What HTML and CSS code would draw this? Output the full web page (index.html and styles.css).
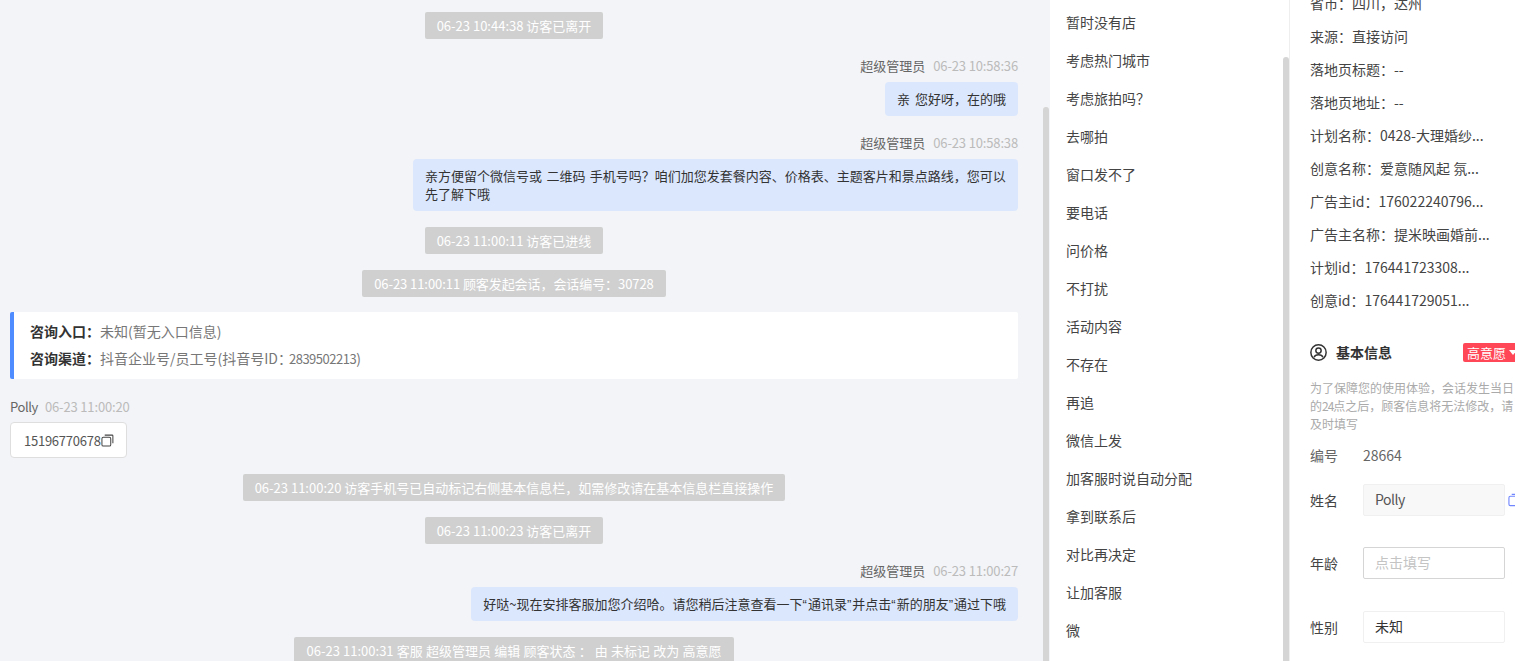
FILE: index.html
```html
<!DOCTYPE html>
<html lang="zh-CN">
<head>
<meta charset="utf-8">
<title>会话</title>
<link rel="stylesheet" href="styles.css">
</head>
<body>
<div class="app">
  <main class="chat">
    <div class="sys">06-23 10:44:38 访客已离开</div>
    <div class="msg">
      <div class="meta">超级管理员<span class="time">06-23 10:58:36</span></div>
      <div class="bubble">亲 您好呀&#xFF0C;在的哦</div>
    </div>
    <div class="msg">
      <div class="meta">超级管理员<span class="time">06-23 10:58:38</span></div>
      <div class="bubble wide">亲方便留个微信号或 二维码 手机号吗&#xFF1F;咱们加您发套餐内容、价格表、主题客片和景点路线&#xFF0C;您可以先了解下哦</div>
    </div>
    <div class="sys">06-23 11:00:11 访客已进线</div>
    <div class="sys tight">06-23 11:00:11 顾客发起会话&#xFF0C;会话编号&#xFF1A;30728</div>
    <div class="card">
      <div class="card-row"><b>咨询入口&#xFF1A;</b><span>未知(暂无入口信息)</span></div>
      <div class="card-row"><b>咨询渠道&#xFF1A;</b><span>抖音企业号/员工号(抖音号ID&#xFF1A;<span class="card-num">2839502213</span>)</span></div>
    </div>
    <div class="msg left">
      <div class="meta">Polly<span class="time">06-23 11:00:20</span></div>
      <div class="phone"><span class="digits">15196770678</span><svg class="copy" viewBox="0 0 14 14" width="13" height="13"><rect x="1" y="3.5" width="9.5" height="9.5" rx="1.5" fill="none" stroke="#444" stroke-width="1.1"/><path d="M4 1.2h8a.8.8 0 0 1 .8.8v8" fill="none" stroke="#444" stroke-width="1.1"/></svg></div>
    </div>
    <div class="sys">06-23 11:00:20 访客手机号已自动标记右侧基本信息栏&#xFF0C;如需修改请在基本信息栏直接操作</div>
    <div class="sys">06-23 11:00:23 访客已离开</div>
    <div class="msg">
      <div class="meta">超级管理员<span class="time">06-23 11:00:27</span></div>
      <div class="bubble">好哒~现在安排客服加您介绍哈。请您稍后注意查看一下<span class="q">&#x201C;</span>通讯录<span class="q">&#x201D;</span>并点击<span class="q">&#x201C;</span>新的朋友<span class="q">&#x201D;</span>通过下哦</div>
    </div>
    <div class="sys loose">06-23 11:00:31 客服 超级管理员 编辑 顾客状态 &#xFF1A; 由 未标记 改为 高意愿</div>
    <div class="scrollbar chat-bar"></div>
  </main>

  <section class="quick">
    <ul class="quick-list">
      <li>暂时没有店</li>
      <li>考虑热门城市</li>
      <li>考虑旅拍吗&#xFF1F;</li>
      <li>去哪拍</li>
      <li>窗口发不了</li>
      <li>要电话</li>
      <li>问价格</li>
      <li>不打扰</li>
      <li>活动内容</li>
      <li>不存在</li>
      <li>再追</li>
      <li>微信上发</li>
      <li>加客服时说自动分配</li>
      <li>拿到联系后</li>
      <li>对比再决定</li>
      <li>让加客服</li>
      <li>微</li>
    </ul>
    <div class="scrollbar quick-bar"></div>
  </section>

  <aside class="info">
    <ul class="source">
      <li>省市&#xFF1A;四川&#xFF0C;达州</li>
      <li>来源&#xFF1A;直接访问</li>
      <li>落地页标题&#xFF1A;--</li>
      <li>落地页地址&#xFF1A;--</li>
      <li>计划名称&#xFF1A;0428-大理婚纱...</li>
      <li>创意名称&#xFF1A;爱意随风起 氛...</li>
      <li>广告主id&#xFF1A;176022240796...</li>
      <li>广告主名称&#xFF1A;提米映画婚前...</li>
      <li>计划id&#xFF1A;176441723308...</li>
      <li>创意id&#xFF1A;176441729051...</li>
    </ul>
    <div class="head">
      <svg class="user" viewBox="0 0 16 16" width="17" height="17"><circle cx="8" cy="8" r="7.2" fill="none" stroke="#333" stroke-width="1.4"/><circle cx="8" cy="6.2" r="2.5" fill="none" stroke="#333" stroke-width="1.4"/><path d="M3.8 12.6c.6-1.9 2.3-2.5 4.2-2.5s3.6.6 4.2 2.5" fill="none" stroke="#333" stroke-width="1.4"/></svg>
      <h3>基本信息</h3>
      <span class="tag">高意愿<i class="caret"></i></span>
    </div>
    <p class="note">为了保障您的使用体验&#xFF0C;会话发生当日<br>的<span class="note-num">24</span>点之后&#xFF0C;顾客信息将无法修改&#xFF0C;请<br>及时填写</p>
    <div class="field plain"><label>编号</label><span>28664</span></div>
    <div class="field"><label>姓名</label><div class="input filled">Polly</div><svg class="blue-copy" viewBox="0 0 14 14" width="13" height="14"><rect x="1" y="3" width="9.5" height="10" rx="1.5" fill="none" stroke="#6f86ff" stroke-width="1.2"/><path d="M4 1h8v9" fill="none" stroke="#6f86ff" stroke-width="1.2"/></svg></div>
    <div class="field"><label>年龄</label><div class="input empty">点击填写</div></div>
    <div class="field"><label>性别</label><div class="input value">未知</div></div>
  </aside>
</div>
</body>
</html>
```
FILE: styles.css
```css
* { box-sizing: border-box; }
html, body { margin: 0; height: 100%; overflow: hidden; }
body {
  font-family: "Noto Sans CJK SC", "Noto Sans", sans-serif;
  font-size: 13px;
  color: #333;
  background: #fff;
}
ul { list-style: none; margin: 0; padding: 0; }

.app { display: flex; width: 1515px; height: 661px; overflow: hidden; }

.chat {
  position: relative;
  flex: 0 0 1050px;
  height: 661px;
  overflow: hidden;
  padding: 12px 32px 0 10px;
  background: #f3f4f7;
  display: flex;
  flex-direction: column;
  align-items: center;
}
.sys {
  flex: none;
  height: 27px;
  line-height: 27px;
  margin-bottom: 16px;
  padding: 0 12px;
  border-radius: 2px;
  background: #d0d0d0;
  color: #fff;
  white-space: nowrap;
}
.sys.tight { letter-spacing: -0.07px; }
.sys.loose { word-spacing: 0.3px; }
.msg {
  flex: none;
  align-self: stretch;
  margin: 2px 0 16px;
  display: flex;
  flex-direction: column;
  align-items: flex-end;
}
.msg.left { align-items: flex-start; }
.meta { height: 18px; line-height: 18px; margin-bottom: 7px; color: #666; }
.msg.left .meta { margin-bottom: 6px; letter-spacing: -0.4px; }
.time { margin-left: 8px; color: #bbb; letter-spacing: -0.15px; }
.msg.left .time { margin-left: 7px; letter-spacing: -0.15px; }
.bubble {
  padding: 8px 12px;
  line-height: 18px;
  border-radius: 4px;
  background: #dbe7fd;
  color: #333;
  word-spacing: 2px;
}
.bubble.wide { width: 605px; padding-right: 11px; word-spacing: 1.5px; }
.q { font-family: "Liberation Sans", sans-serif; line-height: 0; letter-spacing: 1px; }

.card {
  flex: none;
  align-self: stretch;
  height: 67px;
  margin: -1px 0 17px;
  padding: 6px 16px;
  background: #fff;
  border-left: 4px solid #4e8cff;
  border-radius: 2px;
  font-size: 14px;
}
.card-row { height: 27px; line-height: 27px; white-space: nowrap; }
.card-row b { font-weight: 700; color: #333; }
.card-row span { color: #777; }
.card-row .card-num { margin-left: -3px; font-size: 13px; letter-spacing: -0.5px; }

.phone {
  display: flex;
  align-items: center;
  height: 36px;
  padding: 0 12px 0 13px;
  background: #fff;
  border: 1px solid #dedede;
  border-radius: 4px;
  color: #555;
}
.digits { letter-spacing: -0.25px; }
.copy { flex: none; }

.scrollbar {
  position: absolute;
  width: 6px;
  bottom: 0;
  background: #d5d5d5;
  border-radius: 3px 3px 0 0;
}
.chat-bar { right: 1px; top: 107px; }

.quick {
  position: relative;
  flex: 0 0 240px;
  height: 661px;
  overflow: hidden;
  background: #fff;
  border-right: 1px solid #eee;
}
.quick-list { padding: 3px 0 0 16px; }
.quick-list li { height: 38px; line-height: 38px; font-size: 14px; color: #444; }
.quick-bar { right: 0; top: 57px; }

.info { flex: 1; min-width: 0; height: 661px; overflow: hidden; padding-left: 20px; background: #fff; font-size: 14px; }
.source { margin-top: -13px; }
.source li { height: 33px; line-height: 33px; white-space: nowrap; color: #444; }

.head { display: flex; align-items: center; width: 240px; height: 20px; margin-top: 25px; }
.user { flex: none; }
.head h3 { flex: none; margin: 0 0 0 9px; font-size: 14px; font-weight: 700; color: #333; white-space: nowrap; }
.tag {
  display: flex;
  align-items: center;
  flex: none;
  height: 19px;
  margin-left: 71px;
  padding: 0 4px;
  background: #ff4757;
  border-radius: 2px;
  color: #fff;
  font-size: 13px;
  white-space: nowrap;
}
.caret {
  width: 0;
  height: 0;
  margin-left: 3px;
  border: 4px solid transparent;
  border-top: 5px solid #fff;
  border-bottom: 0;
}
.note { width: 225px; margin: 17px 0 0; font-size: 12px; line-height: 18px; color: #aaa; white-space: nowrap; }
.note-num { letter-spacing: -1px; }

.field { display: flex; align-items: center; width: 225px; color: #444; }
.field label { flex: 0 0 53px; }
.field.plain { height: 20px; margin: 12px 0 18.75px; color: #666; }
.field.plain label { color: #666; }
.field:not(.plain) { height: 32px; margin-bottom: 31.5px; }
.input {
  flex: 0 0 142px;
  height: 32px;
  line-height: 29px;
  padding: 0 11px;
  border-radius: 2px;
  border: 1px solid #f0f0f0;
}
.input.filled { background: #f8f8f8; color: #555; letter-spacing: -0.5px; }
.input.empty { border-color: #d5d5d5; color: #c4c4c4; }
.input.value { color: #333; }
.blue-copy { flex: none; margin-left: 3px; }
```
